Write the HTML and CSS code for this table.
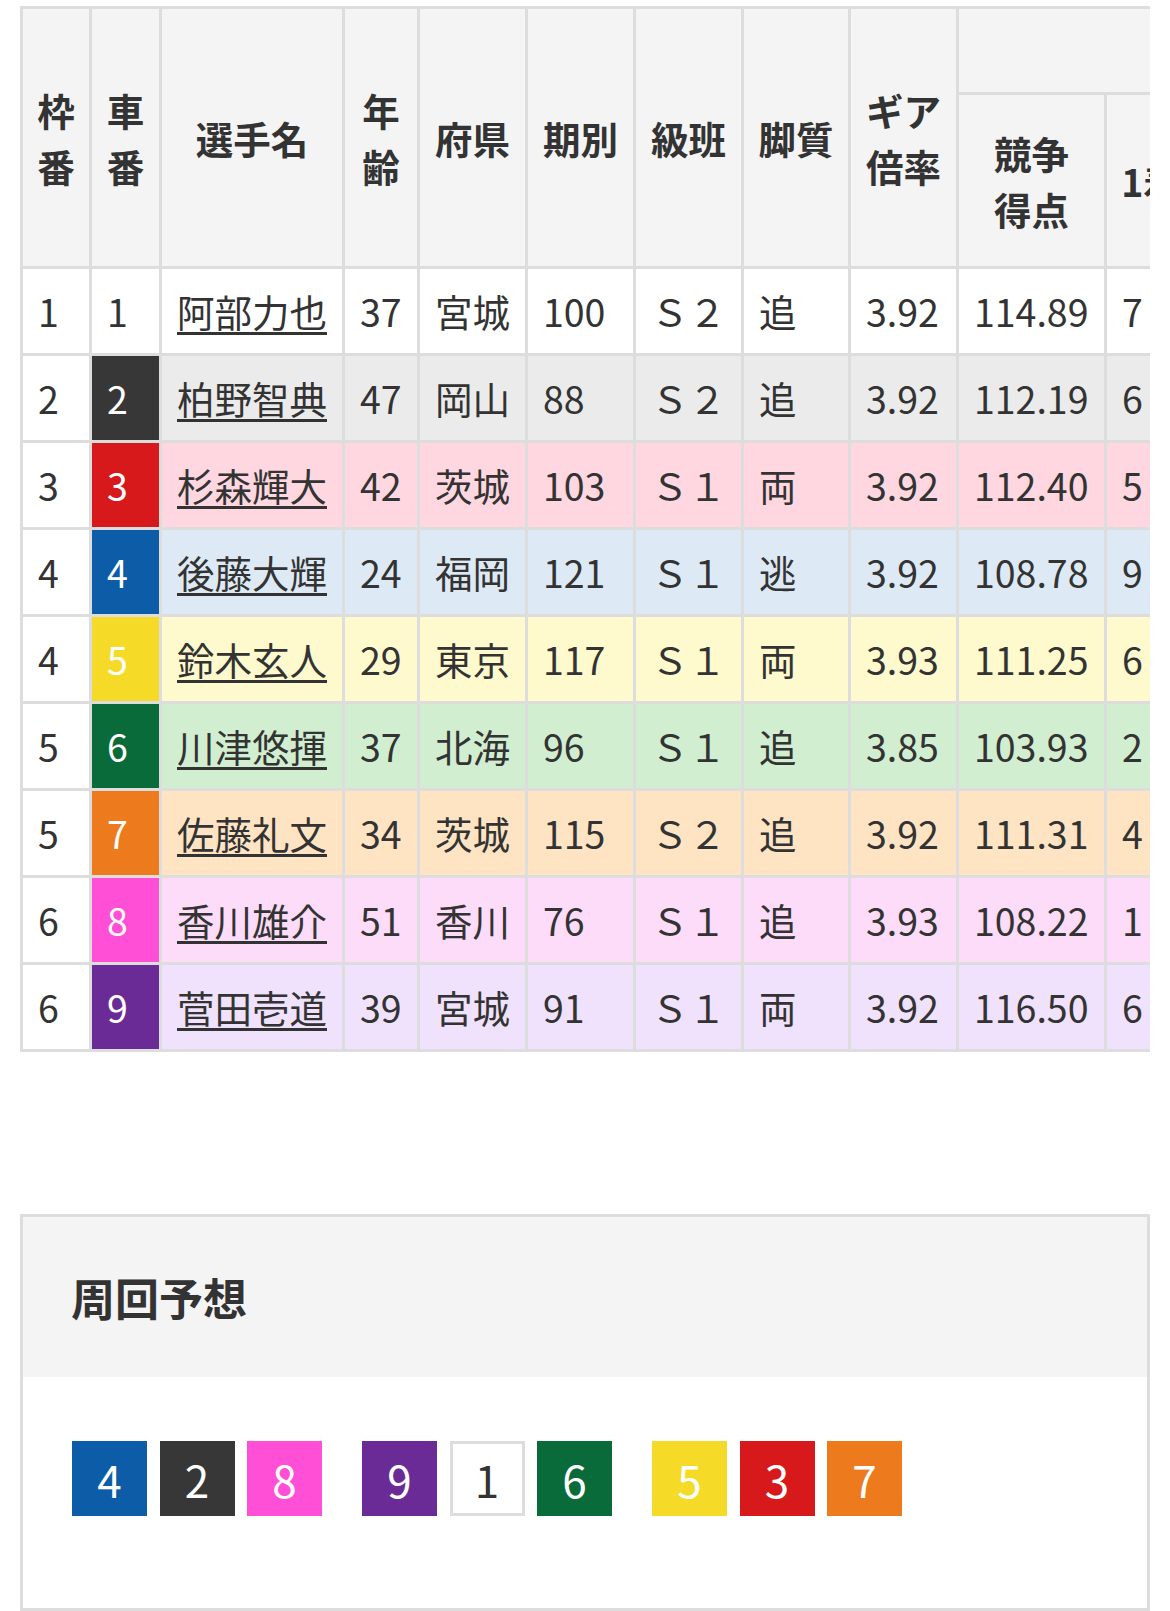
FILE: index.html
```html
<!DOCTYPE html>
<html lang="ja">
<head>
<meta charset="utf-8">
<title>出走表</title>
<link rel="stylesheet" href="styles.css">
</head>
<body>
<div class="page">
  <div class="table-scroll">
    <table class="entry">
      <colgroup>
        <col class="c-waku"><col class="c-car"><col class="c-name"><col class="c-age"><col class="c-pref"><col class="c-term"><col class="c-class"><col class="c-leg"><col class="c-gear"><col class="c-score"><col class="c-ex"><col class="c-ex"><col class="c-ex"><col class="c-ex"><col class="c-ex">
      </colgroup>
      <thead>
        <tr class="head-top">
          <th rowspan="2">枠<br>番</th>
          <th rowspan="2">車<br>番</th>
          <th rowspan="2">選手名</th>
          <th rowspan="2">年<br>齢</th>
          <th rowspan="2">府県</th>
          <th rowspan="2">期別</th>
          <th rowspan="2">級班</th>
          <th rowspan="2">脚質</th>
          <th rowspan="2">ギア<br>倍率</th>
          <th colspan="6" class="group">直近成績</th>
        </tr>
        <tr class="head-sub">
          <th>競争<br>得点</th>
          <th>1着</th>
          <th>2着</th>
          <th>3着</th>
          <th>着外</th>
          <th>勝率</th>
        </tr>
      </thead>
      <tbody>
        <tr class="r1"><td>1</td><td class="car car1">1</td><td><a href="#">阿部力也</a></td><td>37</td><td>宮城</td><td>100</td><td>Ｓ２</td><td>追</td><td>3.92</td><td>114.89</td><td>7</td><td>5</td><td>3</td><td>10</td><td>28.0</td></tr>
        <tr class="r2"><td>2</td><td class="car car2">2</td><td><a href="#">柏野智典</a></td><td>47</td><td>岡山</td><td>88</td><td>Ｓ２</td><td>追</td><td>3.92</td><td>112.19</td><td>6</td><td>4</td><td>5</td><td>9</td><td>25.0</td></tr>
        <tr class="r3"><td>3</td><td class="car car3">3</td><td><a href="#">杉森輝大</a></td><td>42</td><td>茨城</td><td>103</td><td>Ｓ１</td><td>両</td><td>3.92</td><td>112.40</td><td>5</td><td>6</td><td>4</td><td>10</td><td>20.0</td></tr>
        <tr class="r4"><td>4</td><td class="car car4">4</td><td><a href="#">後藤大輝</a></td><td>24</td><td>福岡</td><td>121</td><td>Ｓ１</td><td>逃</td><td>3.92</td><td>108.78</td><td>9</td><td>3</td><td>2</td><td>11</td><td>36.0</td></tr>
        <tr class="r5"><td>4</td><td class="car car5">5</td><td><a href="#">鈴木玄人</a></td><td>29</td><td>東京</td><td>117</td><td>Ｓ１</td><td>両</td><td>3.93</td><td>111.25</td><td>6</td><td>5</td><td>4</td><td>9</td><td>25.0</td></tr>
        <tr class="r6"><td>5</td><td class="car car6">6</td><td><a href="#">川津悠揮</a></td><td>37</td><td>北海</td><td>96</td><td>Ｓ１</td><td>追</td><td>3.85</td><td>103.93</td><td>2</td><td>3</td><td>5</td><td>14</td><td>8.3</td></tr>
        <tr class="r7"><td>5</td><td class="car car7">7</td><td><a href="#">佐藤礼文</a></td><td>34</td><td>茨城</td><td>115</td><td>Ｓ２</td><td>追</td><td>3.92</td><td>111.31</td><td>4</td><td>6</td><td>4</td><td>10</td><td>16.7</td></tr>
        <tr class="r8"><td>6</td><td class="car car8">8</td><td><a href="#">香川雄介</a></td><td>51</td><td>香川</td><td>76</td><td>Ｓ１</td><td>追</td><td>3.93</td><td>108.22</td><td>1</td><td>4</td><td>6</td><td>13</td><td>4.2</td></tr>
        <tr class="r9"><td>6</td><td class="car car9">9</td><td><a href="#">菅田壱道</a></td><td>39</td><td>宮城</td><td>91</td><td>Ｓ１</td><td>両</td><td>3.92</td><td>116.50</td><td>6</td><td>5</td><td>5</td><td>8</td><td>25.0</td></tr>
      </tbody>
    </table>
  </div>

  <section class="lap">
    <h2 class="lap-title">周回予想</h2>
    <div class="lap-body">
      <div class="lap-group">
        <span class="num car4">4</span>
        <span class="num car2">2</span>
        <span class="num car8">8</span>
      </div>
      <div class="lap-group">
        <span class="num car9">9</span>
        <span class="num car1">1</span>
        <span class="num car6">6</span>
      </div>
      <div class="lap-group">
        <span class="num car5">5</span>
        <span class="num car3">3</span>
        <span class="num car7">7</span>
      </div>
    </div>
  </section>
</div>
</body>
</html>
```

FILE: styles.css
```css
* {
  box-sizing: border-box;
}

html, body {
  margin: 0;
  padding: 0;
  background: #fff;
}

body {
  font-family: "Noto Sans CJK JP", "Noto Sans", sans-serif;
  color: #333;
  width: 1170px;
}

.page {
  padding: 6px 20px 0 20px;
}

.table-scroll {
  width: 1130px;
  overflow: hidden;
}

.entry {
  table-layout: fixed;
  border-collapse: separate;
  border-spacing: 0;
  width: 1542px;
  border-top: 3px solid #ddd;
  border-left: 3px solid #ddd;
  font-size: 37.5px;
}

.c-waku { width: 69px; }
.c-car { width: 70px; }
.c-name { width: 183px; }
.c-age { width: 75px; }
.c-pref { width: 108px; }
.c-term { width: 108px; }
.c-class { width: 108px; }
.c-leg { width: 107px; }
.c-gear { width: 108px; }
.c-score { width: 148px; }
.c-ex { width: 91px; }

.entry th,
.entry td {
  border-right: 3px solid #ddd;
  border-bottom: 3px solid #ddd;
  padding: 0 15px;
  vertical-align: middle;
}

.entry th {
  background: #f4f4f4;
  font-weight: 700;
  text-align: center;
  line-height: 1.47;
  white-space: nowrap;
  padding: 0 10px;
}

.head-top .group {
  height: 86px;
}

.head-sub th {
  height: 174px;
}

.entry td {
  height: 87px;
  text-align: left;
  white-space: nowrap;
  line-height: 1.5;
  font-weight: 400;
}

.entry td a {
  color: #333;
  text-decoration: underline;
  text-decoration-thickness: 3px;
  text-underline-offset: 5px;
}

.entry tbody td:first-child {
  background: #fff;
}

.r2 td { background: #ebebeb; }
.r3 td { background: #ffd7e0; }
.r4 td { background: #ddeaf6; }
.r5 td { background: #fffacd; }
.r6 td { background: #d1eed0; }
.r7 td { background: #ffe4c4; }
.r8 td { background: #fddcf9; }
.r9 td { background: #f0e1fc; }

.car1 { background: #fff; color: #333; }
.car2 { background: #373737; color: #fff; }
.car3 { background: #d7191b; color: #fff; }
.car4 { background: #0d5ca8; color: #fff; }
.car5 { background: #f5db27; color: #fff; }
.car6 { background: #096b3a; color: #fff; }
.car7 { background: #ed7b1d; color: #fff; }
.car8 { background: #ff4fd6; color: #fff; }
.car9 { background: #6b2b96; color: #fff; }

.entry td.car1 { background: #fff; color: #333; }
.entry td.car2 { background: #373737; color: #fff; }
.entry td.car3 { background: #d7191b; color: #fff; }
.entry td.car4 { background: #0d5ca8; color: #fff; }
.entry td.car5 { background: #f5db27; color: #fff; }
.entry td.car6 { background: #096b3a; color: #fff; }
.entry td.car7 { background: #ed7b1d; color: #fff; }
.entry td.car8 { background: #ff4fd6; color: #fff; }
.entry td.car9 { background: #6b2b96; color: #fff; }

/* 周回予想 */
.lap {
  margin-top: 162px;
  width: 1130px;
  border: 3px solid #ddd;
}

.lap-title {
  margin: 0;
  height: 160px;
  display: flex;
  align-items: center;
  padding-left: 48px;
  background: #f4f4f4;
  font-size: 44px;
  font-weight: 700;
  color: #333;
}

.lap-body {
  display: flex;
  gap: 40px;
  padding: 64px 48px 92px 49px;
  background: #fff;
}

.lap-group {
  display: flex;
  gap: 12.5px;
}

.num {
  width: 75px;
  height: 75px;
  display: flex;
  align-items: center;
  justify-content: center;
  font-size: 44px;
  line-height: 1;
}

.num.car1 {
  border: 3px solid #ddd;
}
```
